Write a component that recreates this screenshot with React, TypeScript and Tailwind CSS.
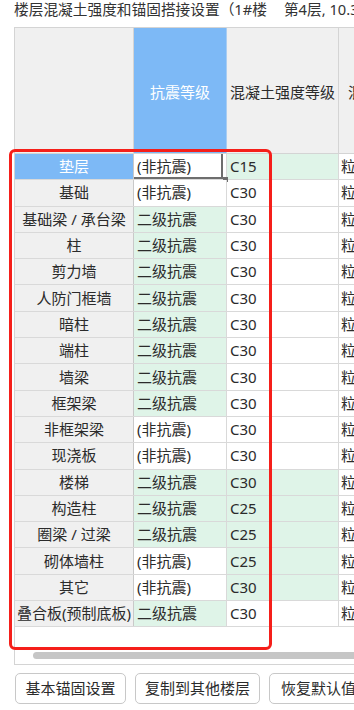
import React from "react";

type Row = { label: string; k: string; kg: boolean; c: string; cg: boolean; sel?: boolean };

const NF = "(非抗震)";
const EJ = "二级抗震";

const rows: Row[] = [
  { label: "垫层", k: NF, kg: false, c: "C15", cg: true, sel: true },
  { label: "基础", k: NF, kg: false, c: "C30", cg: false },
  { label: "基础梁 / 承台梁", k: EJ, kg: true, c: "C30", cg: false },
  { label: "柱", k: EJ, kg: true, c: "C30", cg: false },
  { label: "剪力墙", k: EJ, kg: true, c: "C30", cg: false },
  { label: "人防门框墙", k: EJ, kg: true, c: "C30", cg: false },
  { label: "暗柱", k: EJ, kg: true, c: "C30", cg: false },
  { label: "端柱", k: EJ, kg: true, c: "C30", cg: false },
  { label: "墙梁", k: EJ, kg: true, c: "C30", cg: false },
  { label: "框架梁", k: EJ, kg: true, c: "C30", cg: false },
  { label: "非框架梁", k: NF, kg: false, c: "C30", cg: false },
  { label: "现浇板", k: NF, kg: false, c: "C30", cg: false },
  { label: "楼梯", k: EJ, kg: true, c: "C30", cg: true },
  { label: "构造柱", k: EJ, kg: true, c: "C25", cg: true },
  { label: "圈梁 / 过梁", k: EJ, kg: true, c: "C25", cg: true },
  { label: "砌体墙柱", k: NF, kg: false, c: "C25", cg: true },
  { label: "其它", k: NF, kg: false, c: "C30", cg: true },
  { label: "叠合板(预制底板)", k: EJ, kg: true, c: "C30", cg: false },
];

export default function App() {
  return (
    <div
      className="relative w-[354px] h-[710px] overflow-hidden bg-white text-[#2b2b2b]"
      style={{ fontFamily: '"Noto Sans", "Noto Sans CJK SC", sans-serif' }}
    >
      <div className="h-[27px] pl-[14px] text-[14.7px] leading-[19px] whitespace-nowrap text-[#333333]">
        楼层混凝土强度和锚固搭接设置（1#楼<span className="inline-block w-[17px]" />第4层, 10.35m）
      </div>

      <div className="ml-[14px] w-[500px] h-[638px] border border-[#d4d4d4] flex flex-col">
        {/* header */}
        <div className="flex h-[126px] shrink-0 border-b border-[#d4d4d4] text-[15px]">
          <div className="w-[119px] shrink-0 bg-[#f0f0f0] border-r border-[#d4d4d4]" />
          <div className="w-[93px] shrink-0 bg-[#7db9f6] border-r border-[#a9cdf2] flex items-center justify-center text-white pt-[4px]">
            抗震等级
          </div>
          <div className="w-[112px] shrink-0 bg-[#f0f0f0] border-r border-[#d4d4d4] flex items-center justify-center pt-[4px] whitespace-nowrap">
            混凝土强度等级
          </div>
          <div className="w-[160px] shrink-0 bg-[#f0f0f0] flex items-center pl-[9px] pt-[4px] whitespace-nowrap">
            混凝土保护层
          </div>
        </div>

        {rows.map((r, i) => (
          <div key={i} className="flex h-[26.3px] shrink-0 border-b border-[#d9d9d9] text-[15px] leading-[25px]">
            <div
              className={
                r.sel
                  ? "w-[119px] shrink-0 bg-[#7db9f6] text-white border-r border-[#c9c9c9] flex items-center justify-center whitespace-nowrap"
                  : "w-[119px] shrink-0 bg-[#f0f0f0] border-r border-[#c9c9c9] flex items-center justify-center whitespace-nowrap"
              }
            >
              {r.label}
            </div>
            <div
              className={
                (r.kg ? "bg-[#dff4e8] " : "bg-white ") +
                "relative w-[93px] shrink-0 border-r border-[#d9d9d9] flex items-center pl-[3px] whitespace-nowrap"
              }
            >
              {r.k}
              {r.sel && (
                <>
                  <div className="absolute left-0 right-[3px] bottom-0 h-[2px] bg-[#6e6e6e]" />
                  <div className="absolute top-0 bottom-0 right-[3px] w-[2px] bg-[#6e6e6e]" />
                  <div className="absolute right-[-2px] bottom-[-3px] w-[5px] h-[5px] bg-[#6e6e6e]" />
                </>
              )}
            </div>
            <div
              className={
                (r.cg ? "bg-[#dff4e8] " : "bg-white ") +
                "w-[112px] shrink-0 border-r border-[#d9d9d9] flex items-center pl-[3px]"
              }
            >
              {r.c}
            </div>
            <div className="w-[160px] shrink-0 bg-white flex items-center pl-[2px] whitespace-nowrap">粒径</div>
          </div>
        ))}

        <div className="flex-1 flex flex-col justify-end pb-[5px]">
          <div className="ml-[18px] h-[7px] w-[460px] rounded-full bg-[#c6c6c6]" />
        </div>
      </div>

      <div className="mt-[8px] ml-[15px] flex gap-[9px] text-[15px] whitespace-nowrap">
        <div className="h-[31px] w-[111px] shrink-0 rounded-[5px] border border-[#c8c8c8] bg-white flex items-center justify-center">
          基本锚固设置
        </div>
        <div className="h-[31px] w-[125px] shrink-0 rounded-[5px] border border-[#c8c8c8] bg-white flex items-center justify-center">
          复制到其他楼层
        </div>
        <div className="h-[31px] w-[120px] shrink-0 rounded-[5px] border border-[#c8c8c8] bg-white flex items-center pl-[11px]">
          恢复默认值
        </div>
      </div>

      {/* red annotation box */}
      <div className="absolute left-[9px] top-[149px] w-[263px] h-[501px] border-[3px] border-[#f51f1a] rounded-[6px] pointer-events-none" />
    </div>
  );
}
